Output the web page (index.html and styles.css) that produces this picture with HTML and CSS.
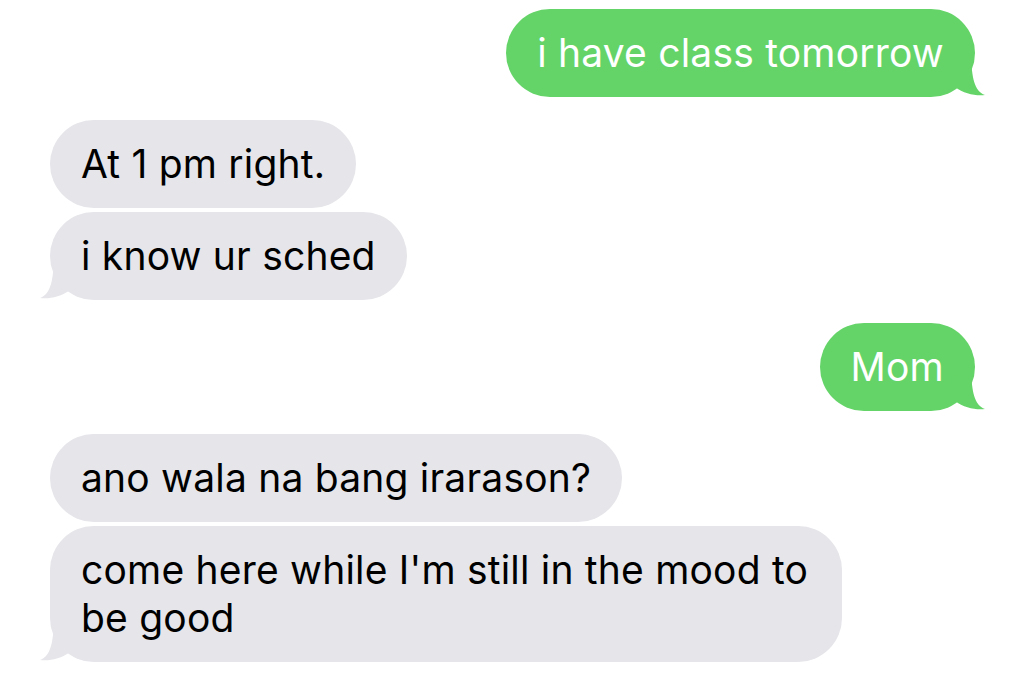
FILE: index.html
```html
<!DOCTYPE html>
<html lang="en">
<head>
    <meta charset="UTF-8">
    <title>Messages</title>
    <link rel="stylesheet" href="styles.css">
</head>
<body>
<div class="thread">
    <!-- outgoing -->
    <div class="bubble sent">
        i have class tomorrow
        <svg class="tail" width="44" height="44" viewBox="0 0 44 44"><path d="M28 4 C29 24 31 38 42 42 C33 43 21 41 12 34 L8 10 Z"/></svg>
    </div>

    <div class="bubble got first">At 1 pm right.</div>
    <div class="bubble got">
        i know ur sched
        <svg class="tail" width="44" height="44" viewBox="0 0 44 44"><path d="M16 4 C15 24 13 38 2 42 C11 43 23 41 32 34 L36 10 Z"/></svg>
    </div>

    <div class="bubble sent">
        Mom
        <svg class="tail" width="44" height="44" viewBox="0 0 44 44"><path d="M28 4 C29 24 31 38 42 42 C33 43 21 41 12 34 L8 10 Z"/></svg>
    </div>

    <div class="bubble got first">ano wala na bang irarason?</div>
    <div class="bubble got">
        come here while I'm still in the mood to be good
        <svg class="tail" width="44" height="44" viewBox="0 0 44 44"><path d="M16 4 C15 24 13 38 2 42 C11 43 23 41 32 34 L36 10 Z"/></svg>
    </div>
</div>
</body>
</html>
```

FILE: styles.css
```css
html, body { margin: 0; background: #fff; }
body { font-family: Inter, "Helvetica Neue", Arial, sans-serif; width: 1024px; height: 694px; overflow: hidden; }

.thread { display: flex; flex-direction: column; padding: 9px 49px 0 50px; }

.bubble { position: relative; font-size: 39px; letter-spacing: 0.2px; line-height: 48px; padding: 20px 31px; border-radius: 44px; max-width: 730px; }
.bubble .tail { position: absolute; bottom: 0; }

.sent { align-self: flex-end; background: #64d468; color: #fff; margin-bottom: 23px; }
.sent .tail { right: -12px; fill: #64d468; }

.got { align-self: flex-start; background: #e5e5ea; color: #000; margin-bottom: 23px; }
.got.first { margin-bottom: 4px; }
.got .tail { left: -12px; fill: #e5e5ea; }
```
